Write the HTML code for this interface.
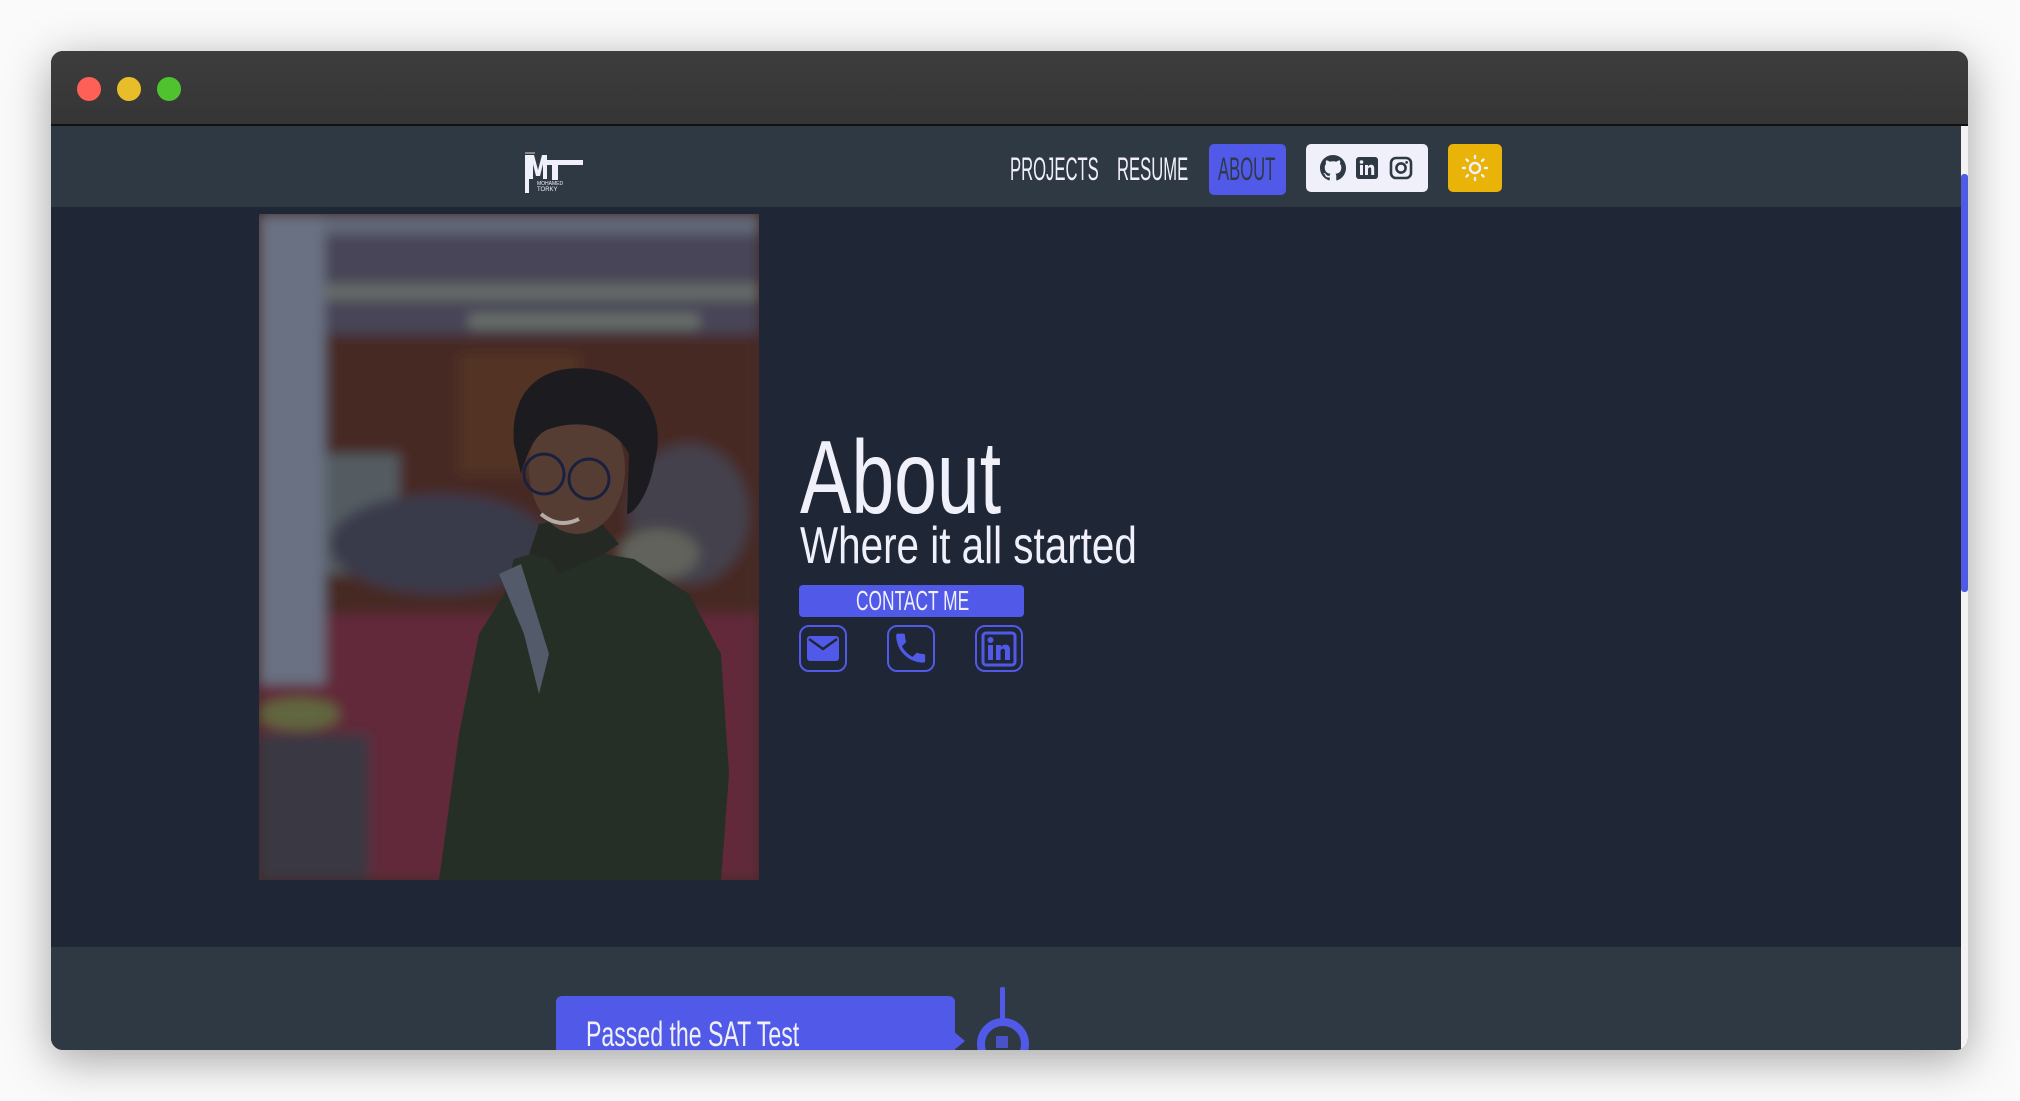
<!DOCTYPE html>
<html><head><meta charset="utf-8">
<style>
*{margin:0;padding:0;box-sizing:border-box}
body{width:2020px;height:1101px;background:#fafafa;position:relative;overflow:hidden;font-family:"Liberation Sans",sans-serif}
.win{position:absolute;left:51px;top:51px;width:1917px;height:999px;border-radius:12px;overflow:hidden;background:#1f2737;box-shadow:0 10px 45px rgba(0,0,0,.35)}
.tb{position:absolute;left:0;top:0;width:100%;height:75px;background:linear-gradient(#3d3d3d,#353535);border-bottom:2px solid #111}
.dot{position:absolute;top:26px;width:24px;height:24px;border-radius:50%}
.nav{position:absolute;left:0;top:75px;width:1910px;height:81px;background:#2f3944}
.t{position:absolute;white-space:nowrap;transform-origin:0 0;line-height:1}
.bottom{position:absolute;left:0;top:896px;width:1910px;height:103px;background:#2f3944}
.sb{position:absolute;left:1910px;top:75px;width:7px;height:924px;background:#f2f2f2}
.thumb{position:absolute;left:1910px;top:123px;width:7px;height:418px;background:#4f5ae6;border-radius:3px}
.ib{position:absolute;top:574px;width:48px;height:47px;border:2px solid #5059e8;border-radius:10px}
</style></head><body>
<div class="win">
 <div class="tb"></div>
 <div class="dot" style="left:26px;background:#fe5f57"></div>
 <div class="dot" style="left:66px;background:#e8bd2a"></div>
 <div class="dot" style="left:106px;background:#50c22f"></div>
 <div class="nav"></div>
 <svg style="position:absolute;left:474px;top:101px" width="58" height="42" viewBox="0 0 58 42">
  <rect x="0" y="0" width="10" height="2" fill="#888"/>
  <rect x="0" y="3" width="4" height="38" fill="#f0f0fa"/>
  <path d="M4 3 L9 3 L13 18 L17 3 L22 3 L22 27 L18 27 L18 12 L15 24 L11 24 L8 12 L8 27 L4 27Z" fill="#f0f0fa"/>
  <rect x="20" y="8" width="38" height="5" fill="#f0f0fa"/>
  <rect x="27" y="8" width="6" height="20" fill="#f0f0fa"/>
  <text x="12" y="33" font-size="5" fill="#f0f0fa" font-family="Liberation Sans">MOHAMED</text>
  <text x="12" y="39" font-size="6" fill="#f0f0fa" font-family="Liberation Sans">TORKY</text>
 </svg>
 <div class="t" style="left:959px;top:102px;font-size:32px;color:#f0f0fa;transform:scaleX(.52)">PROJECTS</div>
 <div class="t" style="left:1066px;top:102px;font-size:32px;color:#f0f0fa;transform:scaleX(.52)">RESUME</div>
 <div style="position:absolute;left:1158px;top:93px;width:77px;height:51px;background:#5059e8;border-radius:5px"></div>
 <div class="t" style="left:1167px;top:102px;font-size:32px;color:#2f3944;transform:scaleX(.52)">ABOUT</div>
 <div style="position:absolute;left:1255px;top:93px;width:122px;height:48px;background:#f0f0fa;border-radius:5px"></div>
 <svg style="position:absolute;left:1269px;top:104px" width="26" height="26" viewBox="0 0 16 16"><path fill="#2f3944" d="M8 0C3.58 0 0 3.58 0 8c0 3.54 2.29 6.53 5.47 7.590.4.07.55-.17.55-.38 0-.19-.01-.82-.01-1.49-2.010.37-2.53-.49-2.69-.94-.09-.23-.48-.94-.82-1.13-.28-.15-.68-.52-.01-.53.63-.01 1.08.58 1.23.82.72 1.21 1.87.87 2.33.66.07-.52.28-.87.51-1.07-1.78-.2-3.64-.89-3.64-3.95 0-.87.31-1.59.82-2.15-.08-.2-.36-1.02.08-2.12 0 0 .67-.21 2.2.82.64-.18 1.32-.27 2-.27.68 0 1.36.09 2 .27 1.53-1.04 2.2-.82 2.2-.82.44 1.1.16 1.92.08 2.12.51.56.82 1.27.82 2.15 0 3.07-1.87 3.75-3.65 3.95.29.25.54.73.54 1.48 0 1.07-.01 1.93-.01 2.2 0 .21.15.46.55.38A8.013 8.013 0 0016 8c0-4.42-3.58-8-8-8z"/></svg>
 <svg style="position:absolute;left:1304px;top:105px" width="24" height="24" viewBox="0 0 24 24"><rect x="1" y="1" width="22" height="22" rx="3" fill="#2f3944"/><rect x="5" y="9" width="3" height="10" fill="#f0f0fa"/><circle cx="6.5" cy="6" r="1.8" fill="#f0f0fa"/><path d="M10 9h3v1.5c.6-1 1.7-1.8 3.2-1.8 2.4 0 3 1.6 3 3.8V19h-3v-5.6c0-1.2-.3-2-1.4-2-1.2 0-1.8.9-1.8 2.2V19h-3z" fill="#f0f0fa"/></svg>
 <svg style="position:absolute;left:1338px;top:105px" width="24" height="24" viewBox="0 0 24 24"><rect x="2" y="2" width="20" height="20" rx="5" fill="none" stroke="#2f3944" stroke-width="2.6"/><circle cx="12" cy="12" r="4.6" fill="none" stroke="#2f3944" stroke-width="2.6"/><circle cx="17.6" cy="6.4" r="1.4" fill="#2f3944"/></svg>
 <div style="position:absolute;left:1397px;top:93px;width:54px;height:48px;background:#e9b308;border-radius:5px"></div>
 <svg style="position:absolute;left:1410px;top:103px" width="28" height="28" viewBox="0 0 28 28" stroke="#f0f0fa" stroke-width="2.4" stroke-linecap="round" fill="none"><circle cx="14" cy="14" r="5"/><path d="M14 2v2M14 24v2M2 14h2M24 14h2M5.5 5.5l1.4 1.4M21.1 21.1l1.4 1.4M5.5 22.5l1.4-1.4M21.1 6.9l1.4-1.4"/></svg>

 <svg style="position:absolute;left:208px;top:163px" width="500" height="666" viewBox="0 0 500 666">
  <defs><filter id="b"><feGaussianBlur stdDeviation="6"/></filter><clipPath id="c"><rect width="500" height="666"/></clipPath></defs>
  <g clip-path="url(#c)">
  <rect width="500" height="666" fill="#4a2a26"/>
  <g filter="url(#b)">
   <rect x="0" y="0" width="500" height="60" fill="#6a7282"/>
   <rect x="60" y="20" width="440" height="100" fill="#4e4a5c"/>
   <rect x="60" y="70" width="440" height="16" fill="#6f7670"/>
   <rect x="210" y="100" width="230" height="14" fill="#747c72"/>
   <rect x="60" y="120" width="440" height="300" fill="#4d2c22"/>
   <rect x="200" y="140" width="120" height="120" fill="#5a3420"/>
   <rect x="0" y="400" width="500" height="266" fill="#6a2c3a"/>
   <rect x="60" y="240" width="80" height="120" fill="#5b6468"/>
   <ellipse cx="180" cy="330" rx="110" ry="50" fill="#3e3e4e"/>
   <ellipse cx="430" cy="300" rx="60" ry="70" fill="#4a4450"/>
   <ellipse cx="400" cy="340" rx="40" ry="25" fill="#6a6a60"/>
   <ellipse cx="40" cy="500" rx="40" ry="16" fill="#6a7040"/>
   <rect x="0" y="520" width="110" height="146" fill="#3e3a44"/>
   <rect x="0" y="0" width="66" height="470" fill="#737c8c"/>
  </g>
  <path d="M255 345 L290 335 L345 340 L375 345 L430 380 L462 440 L470 560 L462 666 L180 666 L200 520 L220 420 L245 380Z" fill="#273024"/>
  <path d="M240 360 L262 350 L290 440 L280 480 L265 420Z" fill="#5a6272"/>
  <path d="M270 340 L290 345 L300 360 L345 340 L360 330 L335 300 L280 310Z" fill="#262a22"/>
  <ellipse cx="318" cy="255" rx="48" ry="65" fill="#5e4034"/>
  <path d="M255 230 C250 170 290 150 330 155 C380 160 410 200 395 250 C390 280 375 300 368 300 L370 240 C355 210 320 205 290 215 C275 220 268 240 262 260 Z" fill="#1c1a1c"/>
  <circle cx="285" cy="260" r="20" fill="none" stroke="#1a2040" stroke-width="3"/>
  <circle cx="330" cy="265" r="20" fill="none" stroke="#1a2040" stroke-width="3"/>
  <path d="M282 300 Q300 315 320 305" stroke="#c8c0b8" stroke-width="4" fill="none"/>
  </g>
  <rect width="500" height="666" fill="#1f2737" opacity=".12"/>
 </svg>

 <div class="t" style="left:749px;top:375px;font-size:104px;color:#f0f0fa;transform:scaleX(.74)">About</div>
 <div class="t" style="left:749px;top:469px;font-size:52px;color:#f0f0fa;transform:scaleX(.777)">Where it all started</div>
 <div style="position:absolute;left:748px;top:534px;width:225px;height:32px;background:#5059e8;border-radius:4px"></div>
 <div class="t" style="left:805px;top:536px;font-size:28px;color:#f0f0fa;transform:scaleX(.62)">CONTACT ME</div>
 <div class="ib" style="left:748px"><svg width="44" height="43" viewBox="0 0 44 43"><rect x="6" y="9" width="32" height="25" rx="3" fill="#5059e8"/><path d="M8 12 L22 22 L36 12" stroke="#1f2737" stroke-width="2.5" fill="none"/></svg></div>
 <div class="ib" style="left:836px"><svg width="44" height="43" viewBox="0 0 24 24"><path transform="translate(1 1) scale(.9)" fill="#5059e8" d="M6.6 10.8c1.4 2.8 3.8 5.1 6.6 6.6l2.2-2.2c.3-.3.7-.4 1-.2 1.1.4 2.3.6 3.6.6.6 0 1 .4 1 1V20c0 .6-.4 1-1 1C10.6 21 3 13.4 3 4c0-.6.4-1 1-1h3.5c.6 0 1 .4 1 1 0 1.3.2 2.5.6 3.6.1.3 0 .7-.2 1z"/></svg></div>
 <div class="ib" style="left:924px"><svg width="44" height="43" viewBox="0 0 44 43"><rect x="6" y="6" width="32" height="32" rx="3" fill="none" stroke="#5059e8" stroke-width="3"/><rect x="11" y="18" width="5" height="15" fill="#5059e8"/><circle cx="13.5" cy="13" r="3" fill="#5059e8"/><path d="M19 18h5v2c1-1.5 2.5-2.4 4.5-2.4 3.5 0 4.5 2.3 4.5 5.5V33h-5v-8.5c0-1.7-.5-2.8-2-2.8-1.7 0-2.5 1.2-2.5 3V33h-4.5z" fill="#5059e8"/></svg></div>

 <div class="bottom"></div>
 <div style="position:absolute;left:505px;top:945px;width:399px;height:60px;background:#5059e8;border-radius:6px 6px 0 0"></div>
 <div style="position:absolute;left:902px;top:980px;width:0;height:0;border-top:10px solid transparent;border-bottom:10px solid transparent;border-left:12px solid #5059e8"></div>
 <div class="t" style="left:535px;top:966px;font-size:35px;color:#f0f0fa;transform:scaleX(.66)">Passed the SAT Test</div>
 <div style="position:absolute;left:949px;top:936px;width:5px;height:36px;background:#5059e8;border-radius:2px"></div>
 <div style="position:absolute;left:926px;top:967px;width:52px;height:52px;border:8px solid #5059e8;border-radius:50%;background:#2f3944"></div>
 <div style="position:absolute;left:945px;top:985px;width:12px;height:12px;background:#5059e8;opacity:.8"></div>
 <div class="sb"></div><div class="thumb"></div>
</div>
</body></html>
